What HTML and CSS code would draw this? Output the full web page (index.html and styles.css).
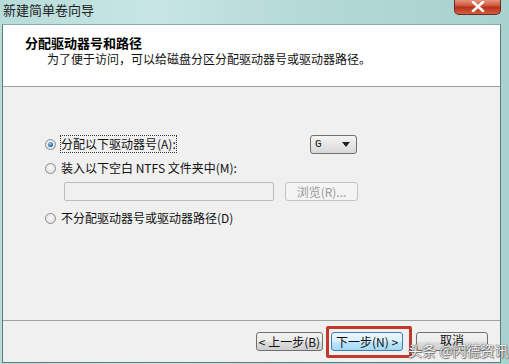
FILE: index.html
```html
<!DOCTYPE html>
<html lang="zh-CN">
<head>
<meta charset="utf-8">
<title>新建简单卷向导</title>
<link rel="stylesheet" href="styles.css">
</head>
<body>
<div class="window">
  <div class="titlebar">
    <span class="title">新建简单卷向导</span>
    <span class="close"><svg width="14" height="11" viewBox="0 0 14 11"><path d="M2 1 L12 10 M12 1 L2 10" stroke="#fff" stroke-width="2.6" stroke-linecap="round"/></svg></span>
  </div>
  <div class="client">
    <div class="header">
      <div class="h-title">分配驱动器号和路径</div>
      <div class="h-sub">为了便于访问，可以给磁盘分区分配驱动器号或驱动器路径。</div>
    </div>
    <div class="body">
      <div class="row row1">
        <div class="opt">
          <span class="radio checked"></span>
          <span class="label focus">分配以下驱动器号(A):</span>
        </div>
        <div class="select"><span>G</span><svg width="8" height="5" viewBox="0 0 8 5"><path d="M0 0 H8 L4 5 Z" fill="#222"/></svg></div>
      </div>
      <div class="row row2">
        <div class="opt">
          <span class="radio"></span>
          <span class="label">装入以下空白 NTFS 文件夹中(M):</span>
        </div>
      </div>
      <div class="row row3">
        <div class="textbox"></div>
        <div class="browse">浏览(R)...</div>
      </div>
      <div class="row row4">
        <div class="opt">
          <span class="radio"></span>
          <span class="label">不分配驱动器号或驱动器路径(D)</span>
        </div>
      </div>
    </div>
    <div class="footer">
      <div class="btn back">&lt; 上一步(B)</div>
      <div class="btn next">下一步(N) &gt;<span class="mark"></span></div>
      <div class="btn cancel">取消</div>
      <span class="watermark">头条 @闪德资讯</span>
    </div>
  </div>
</div>
</body>
</html>
```

FILE: styles.css
```css
html, body {
  margin: 0;
  padding: 0;
}
body {
  width: 509px;
  height: 364px;
  overflow: hidden;
  font-family: "Noto Sans CJK SC", "Liberation Sans", sans-serif;
  font-size: 12px;
  color: #111;
}
.window {
  width: 509px;
  height: 364px;
  display: flex;
  flex-direction: column;
  background: linear-gradient(90deg, #b7dcda 0%, #c7e6e3 30%, #b4d9d6 60%, #a7d2cf 100%);
}
.titlebar {
  height: 24px;
  display: flex;
  align-items: flex-start;
  justify-content: space-between;
  padding: 0 8px 0 3px;
  flex: none;
}
.title {
  font-size: 13px;
  line-height: 20px;
  color: #222;
}
.close {
  width: 47px;
  height: 16px;
  margin-top: -1px;
  box-sizing: border-box;
  border: 1px solid #6b2b20;
  border-top: none;
  border-radius: 0 0 5px 5px;
  background: linear-gradient(180deg, #e7a08c 0%, #d0553a 45%, #b8311b 55%, #d0603e 100%);
  display: flex;
  align-items: center;
  justify-content: center;
}
.client {
  flex: 1;
  margin: 0 8px 1px 2px;
  border: 1px solid #5f7a78;
  border-top-color: #8aa;
  background: #f0f0f0;
  display: flex;
  flex-direction: column;
}
.header {
  height: 62px;
  background: #fff;
  border-bottom: 1px solid #a0a0a0;
  padding: 10px 0 0 22px;
  box-sizing: border-box;
  flex: none;
}
.h-title {
  font-weight: bold;
  font-size: 13px;
  line-height: 16px;
  color: #000;
}
.h-sub {
  padding-left: 22px;
  line-height: 16px;
  margin-top: 0;
  color: #111;
}
.body {
  flex: 1;
  padding: 47px 0 0 42px;
  display: flex;
  flex-direction: column;
}
.row {
  display: flex;
  align-items: center;
}
.row1 { height: 20px; }
.row2 { height: 20px; margin-top: 4px; }
.row3 { height: 20px; margin-top: 3px; padding-left: 19px; }
.row4 { height: 20px; margin-top: 7px; }
.opt {
  display: flex;
  align-items: center;
}
.row1 .opt { width: 265px; }
.radio {
  width: 11px;
  height: 11px;
  border-radius: 50%;
  box-sizing: border-box;
  border: 1px solid #8a8a8a;
  background: radial-gradient(circle at 50% 40%, #f8f8f8 0%, #dcdcdc 100%);
  margin-right: 5px;
  position: relative;
  flex: none;
}
.radio.checked::after {
  content: "";
  position: absolute;
  left: 2px;
  top: 2px;
  width: 5px;
  height: 5px;
  border-radius: 50%;
  background: radial-gradient(circle at 40% 35%, #9fd0f0 0%, #2a6fb0 60%, #184c84 100%);
}
.label {
  line-height: 16px;
  white-space: nowrap;
}
.label.focus {
  outline: 1px dotted #333;
  outline-offset: 0;
}
.select {
  width: 47px;
  height: 19px;
  box-sizing: border-box;
  border: 1px solid #707070;
  border-radius: 3px;
  background: linear-gradient(180deg, #f4f4f4 0%, #e6e6e6 50%, #d8d8d8 100%);
  display: flex;
  align-items: center;
  justify-content: space-between;
  padding: 0 6px 0 4px;
  font-family: "Liberation Mono", monospace;
  font-size: 11px;
}
.textbox {
  width: 210px;
  height: 19px;
  box-sizing: border-box;
  border: 1px solid #bdbdbd;
  border-radius: 2px;
  background: #f0f0f0;
}
.browse {
  width: 73px;
  height: 19px;
  box-sizing: border-box;
  margin-left: 11px;
  border: 1px solid #c4c4c4;
  border-radius: 3px;
  background: #f4f4f4;
  color: #9a9a9a;
  line-height: 17px;
  text-align: center;
}
.footer {
  height: 42px;
  border-top: 1px solid #a0a0a0;
  box-sizing: border-box;
  flex: none;
  display: flex;
  align-items: center;
  padding: 0 0 0 253px;
  position: relative;
}
.btn {
  height: 19px;
  box-sizing: border-box;
  border: 1px solid #707070;
  border-radius: 3px;
  background: linear-gradient(180deg, #f2f2f2 0%, #ebebeb 50%, #dddddd 51%, #cfcfcf 100%);
  line-height: 17px;
  text-align: center;
  position: relative;
  color: #111;
}
.back { width: 67px; }
.next {
  width: 72px;
  margin-left: 8px;
  border-color: #3c7fb1;
  background: linear-gradient(180deg, #eaf6fd 0%, #d9f0fc 50%, #bee6fd 51%, #a7d9f5 100%);
}
.cancel {
  width: 72px;
  margin-left: 13px;
  line-height: 14px;
}
.mark {
  position: absolute;
  left: -6px;
  top: -7px;
  width: 86px;
  height: 32px;
  box-sizing: border-box;
  border: 3px solid #c0392b;
  border-radius: 2px;
}
.watermark {
  position: absolute;
  left: 405px;
  top: 20px;
  font-size: 14px;
  line-height: 18px;
  color: #f4f4f4;
  text-shadow: 0 0 1px #555, 0 0 1px #555, 1px 1px 1px #777;
  white-space: nowrap;
}
```
